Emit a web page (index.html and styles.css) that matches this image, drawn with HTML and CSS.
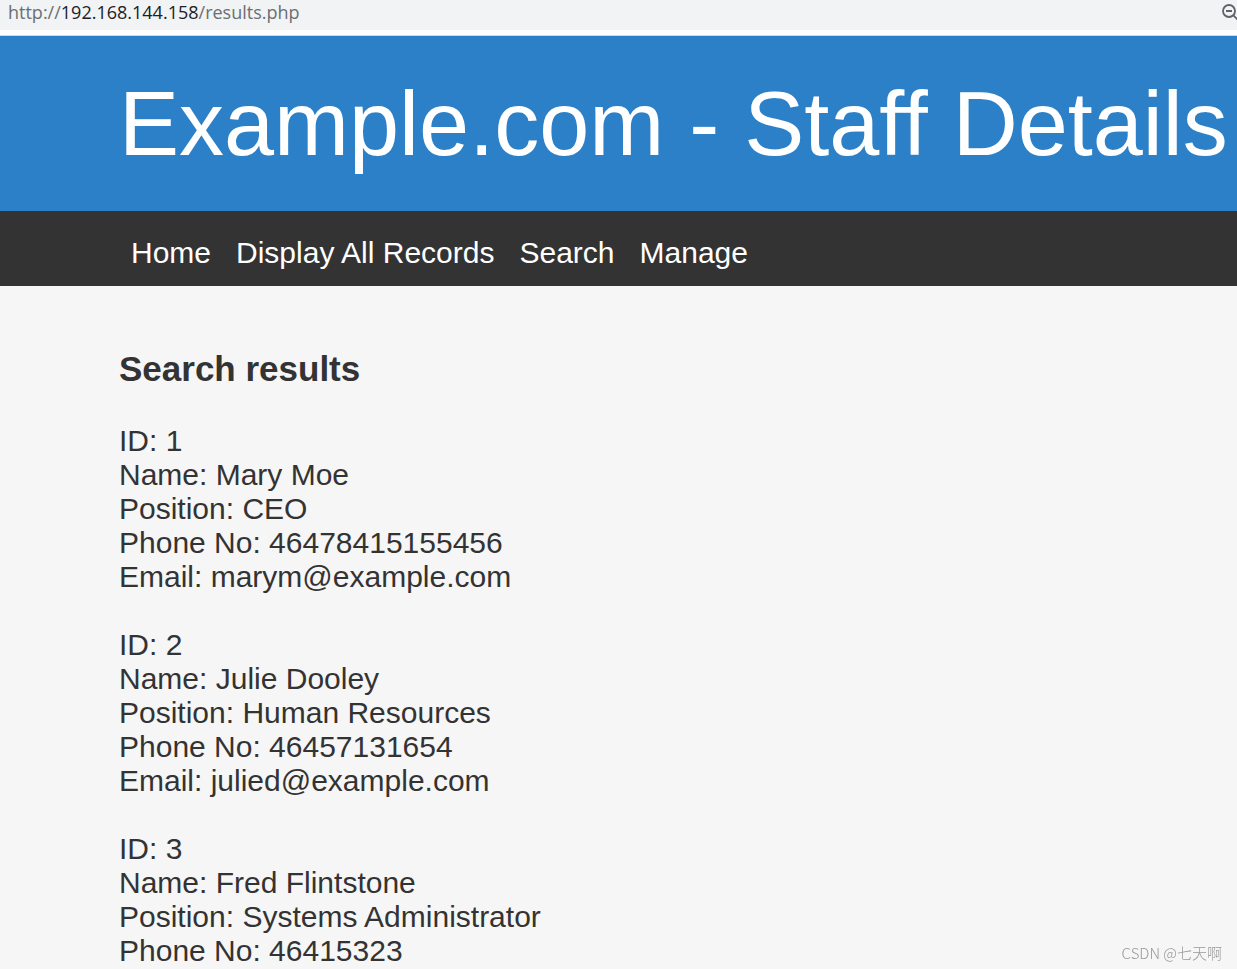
FILE: index.html
```
<!DOCTYPE html>
<html lang="en">
<head>
    <meta charset="UTF-8">
    <meta name="viewport" content="width=device-width, initial-scale=1.0">
    <title>Example.com - Staff Details</title>
    <link rel="stylesheet" href="styles.css">
</head>
<body>
    <div class="address-bar">
        <div class="url">http://<span class="host">192.168.144.158</span>/results.php</div>
        <button class="zoom" aria-label="Zoom out">
            <svg width="18" height="18" viewBox="0 0 18 18" fill="none" stroke="#5f6368" stroke-width="1.8">
                <circle cx="8" cy="7" r="6"/>
                <path d="M5 7h6M12.4 11.4l5 5"/>
            </svg>
        </button>
    </div>
    <header>
        <h1>Example.com - Staff Details</h1>
    </header>
    <nav>
        <ul>
            <li><a href="index.php">Home</a></li>
            <li><a href="display.php">Display All Records</a></li>
            <li><a href="search.php">Search</a></li>
            <li><a href="manage.php">Manage</a></li>
        </ul>
    </nav>
    <main>
        <h3>Search results</h3>
        <p>ID: 1<br>
        Name: Mary Moe<br>
        Position: CEO<br>
        Phone No: 46478415155456<br>
        Email: marym@example.com</p>
        <p>ID: 2<br>
        Name: Julie Dooley<br>
        Position: Human Resources<br>
        Phone No: 46457131654<br>
        Email: julied@example.com</p>
        <p>ID: 3<br>
        Name: Fred Flintstone<br>
        Position: Systems Administrator<br>
        Phone No: 46415323</p>
    </main>
    <div class="watermark">CSDN @七天啊</div>
</body>
</html>
```
FILE: styles.css
```
* {
    margin: 0;
    padding: 0;
    box-sizing: border-box;
}

body {
    min-height: 100vh;
    overflow: hidden;
    background: #f6f6f6;
    color: #333;
    font-family: Arial, "Liberation Sans", sans-serif;
    font-size: 30px;
    line-height: 34px;
}

/* Browser address bar */
.address-bar {
    display: flex;
    justify-content: space-between;
    height: 36px;
    padding-left: 8px;
    background: #f1f3f4;
    border-bottom: 1px solid #d5d9dc;
    box-shadow: inset 0 -5px #fff;
    overflow: hidden;
}

.url {
    color: #6b6f73;
    font-family: "Segoe UI", "Open Sans", sans-serif;
    font-size: 18px;
    line-height: 24px;
}

.host {
    color: #202124;
}

.zoom {
    width: 16px;
    height: 26px;
    border: none;
    background: none;
    overflow: hidden;
    cursor: pointer;
}

.zoom svg {
    display: block;
}

header {
    padding: 36px 0 35px 119px;
    background: #2c80c8;
    color: #fff;
}

h1 {
    font-size: 90px;
    font-weight: normal;
    line-height: 104px;
    white-space: nowrap;
}

nav {
    padding: 25px 0 16px 131px;
    background: #333;
}

nav ul {
    display: flex;
    gap: 25px;
    list-style: none;
}

nav a {
    color: #fff;
    text-decoration: none;
}

nav a:hover {
    text-decoration: underline;
}

main {
    padding: 63px 119px 0;
}

h3 {
    margin-bottom: 35px;
    font-size: 35px;
    line-height: 40px;
}

p {
    margin-bottom: 34px;
}

.watermark {
    position: fixed;
    right: 15px;
    bottom: 6px;
    color: #999;
    font-family: "Noto Sans CJK SC", sans-serif;
    font-size: 15px;
    font-weight: 300;
    line-height: 20px;
}
```
